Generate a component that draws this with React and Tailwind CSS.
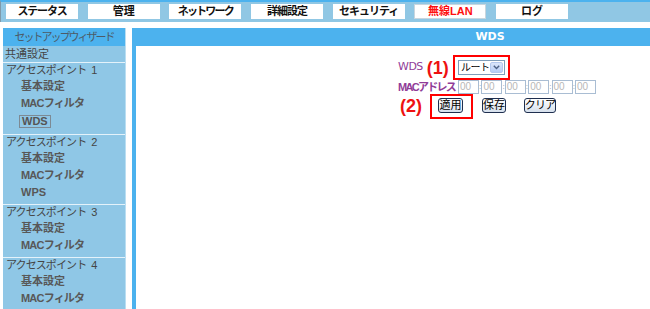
import React from 'react';

const TABS = [
  { label: 'ステータス', track: 'tracking-[-1.2px]' },
  { label: '管理', track: '' },
  { label: 'ネットワーク', track: 'tracking-[-1.8px]' },
  { label: '詳細設定', track: 'tracking-[-1px]' },
  { label: 'セキュリティ', track: 'tracking-[-1px]' },
  { label: '無線LAN', track: '' },
  { label: 'ログ', track: '' },
];

const GROUPS = [
  { num: 1, items: ['基本設定', 'MACフィルタ', 'WDS'] },
  { num: 2, items: ['基本設定', 'MACフィルタ', 'WPS'] },
  { num: 3, items: ['基本設定', 'MACフィルタ'] },
  { num: 4, items: ['基本設定', 'MACフィルタ'] },
];

const Separator = () => <div className="h-px bg-[#e4f2fa]" />;

const Sidebar = () => (
  <div className="w-[123px] ml-[3px] shrink-0 bg-[#8fc7e6] h-[281px] border-r border-[#b9def2] text-[11px] leading-none">
    <div className="h-[18px] bg-[#4cb2ee] flex items-center justify-center text-[#4d5b67] tracking-[-2px]">
      セットアップウィザード
    </div>
    <div className="h-[16px] flex items-center pl-[2px] text-[#454545]">共通設定</div>
    <Separator />
    {GROUPS.map((g) => (
      <div key={g.num}>
        <div className="pb-[3px]">
          <div className="h-[15px] flex items-center pl-[3px] text-[#454545]">
            <span className="tracking-[-0.9px]">アクセスポイント</span>
            <span className="ml-[5px]">{g.num}</span>
          </div>
          {g.items.map((it) =>
            it === 'WDS' ? (
              <div key={it} className="h-[19px] flex items-center pl-[16px]">
                <span className="border border-[#7d8a94] px-[2px] h-[13px] flex items-center font-bold text-[#555]">
                  {it}
                </span>
              </div>
            ) : (
              <div
                key={it}
                className={`h-[17px] flex items-center pl-[18px] font-bold text-[#585858] ${
                  it === 'MACフィルタ' ? 'tracking-[-0.8px]' : ''
                }`}
              >
                {it}
              </div>
            )
          )}
        </div>
        <Separator />
      </div>
    ))}
  </div>
);

const FakeSelect = () => (
  <div className="relative w-[47px] h-[15px] border border-[#7f9db9] bg-white flex items-center">
    <span className="pl-[2px] text-[10px] text-black leading-none flex-1 whitespace-nowrap tracking-[-0.5px]">ルート</span>
    <span className="w-[13px] h-[11px] mr-px bg-gradient-to-b from-[#dbe6fb] to-[#b7cdf5] border border-[#b4c8ee] rounded-[2px] flex items-center justify-center">
      <svg width="7" height="5" viewBox="0 0 7 5">
        <path d="M0.8 0.8 L3.5 3.6 L6.2 0.8" fill="none" stroke="#4d6185" strokeWidth="1.4" />
      </svg>
    </span>
    <span className="absolute -inset-[6px] border-2 border-[#ff0000]" />
  </div>
);

const Btn = ({ children, w }) => (
  <span className={`${w} h-[15px] border border-[#1f2f4f] rounded-[3px] bg-gradient-to-b from-white to-[#d6e0ec] flex items-center justify-center text-[11px] leading-none text-black whitespace-nowrap`}>
    {children}
  </span>
);

const Panel = () => (
  <div className="ml-[6px] w-[716px] shrink-0 flex flex-col h-[281px]">
    <div className="h-[18px] bg-[#4cb2ee] flex items-center justify-center text-white font-bold text-[11px] font-['DejaVu_Sans',sans-serif]">
      WDS
    </div>
    <div className="flex-1 border-l-4 border-[#4cb2ee] pl-[262px] pt-[14px]">
      <div className="flex items-center h-[15px]">
        <div className="w-[60px] flex items-center">
          <span className="text-[11px] text-[#913c98] font-['DejaVu_Sans',sans-serif] tracking-[-0.5px]">WDS</span>
          <span className="ml-[4px] text-[18px] font-bold text-[#ee1111] leading-none font-['Liberation_Sans',sans-serif]">(1)</span>
        </div>
        <FakeSelect />
      </div>
      <div className="flex items-center h-[14px] mt-[5px]">
        <span className="w-[60px] text-[11px] font-bold text-[#913c98] whitespace-nowrap tracking-[-1.7px]">MACアドレス</span>
        {[0, 1, 2, 3, 4, 5].map((i) => (
          <React.Fragment key={i}>
            {i > 0 && <span className="w-[2.4px] text-[8px] text-[#8a9aaa] leading-none flex justify-center">:</span>}
            <span className="w-[21px] h-[14px] shrink-0 border border-[#a9bdd3] bg-white text-[10px] text-[#b8b8b8] leading-none flex items-center pl-px">
              00
            </span>
          </React.Fragment>
        ))}
      </div>
      <div className="flex items-center h-[15px] mt-[4px] pl-[2px]">
        <span className="w-[38px] text-[18px] font-bold text-[#ee1111] leading-none font-['Liberation_Sans',sans-serif]">(2)</span>
        <span className="relative flex">
          <Btn w="w-[25px]">適用</Btn>
          <span className="absolute -left-[8px] -right-[10px] -top-[4px] -bottom-[6px] border-2 border-[#ff0000]" />
        </span>
        <span className="ml-[19px]"><Btn w="w-[24px]">保存</Btn></span>
        <span className="ml-[18px]"><Btn w="w-[32px]"><span className="tracking-[-0.8px]">クリア</span></Btn></span>
      </div>
    </div>
  </div>
);

export default function App() {
  return (
    <div className="w-[650px] h-[309px] overflow-hidden bg-white font-['Liberation_Sans','Noto_Sans_CJK_JP',sans-serif]">
      <div className="h-[22px] bg-[#90c7e4] border-t-2 border-[#4cb2ee] border-l border-l-[#7f9aab] flex gap-[9.67px] pl-[5px] pt-[2px] w-[900px]">
        {TABS.map((t) => (
          <div
            key={t.label}
            className={`w-[72px] h-[15px] shrink-0 bg-white flex items-center justify-center text-[11px] font-bold leading-none ${t.track} ${
              t.label === '無線LAN' ? 'text-[#ff1010] border border-[#c9d6de]' : 'text-[#111]'
            }`}
          >
            {t.label}
          </div>
        ))}
      </div>
      <div className="flex pt-[6px]">
        <Sidebar />
        <Panel />
      </div>
    </div>
  );
}
